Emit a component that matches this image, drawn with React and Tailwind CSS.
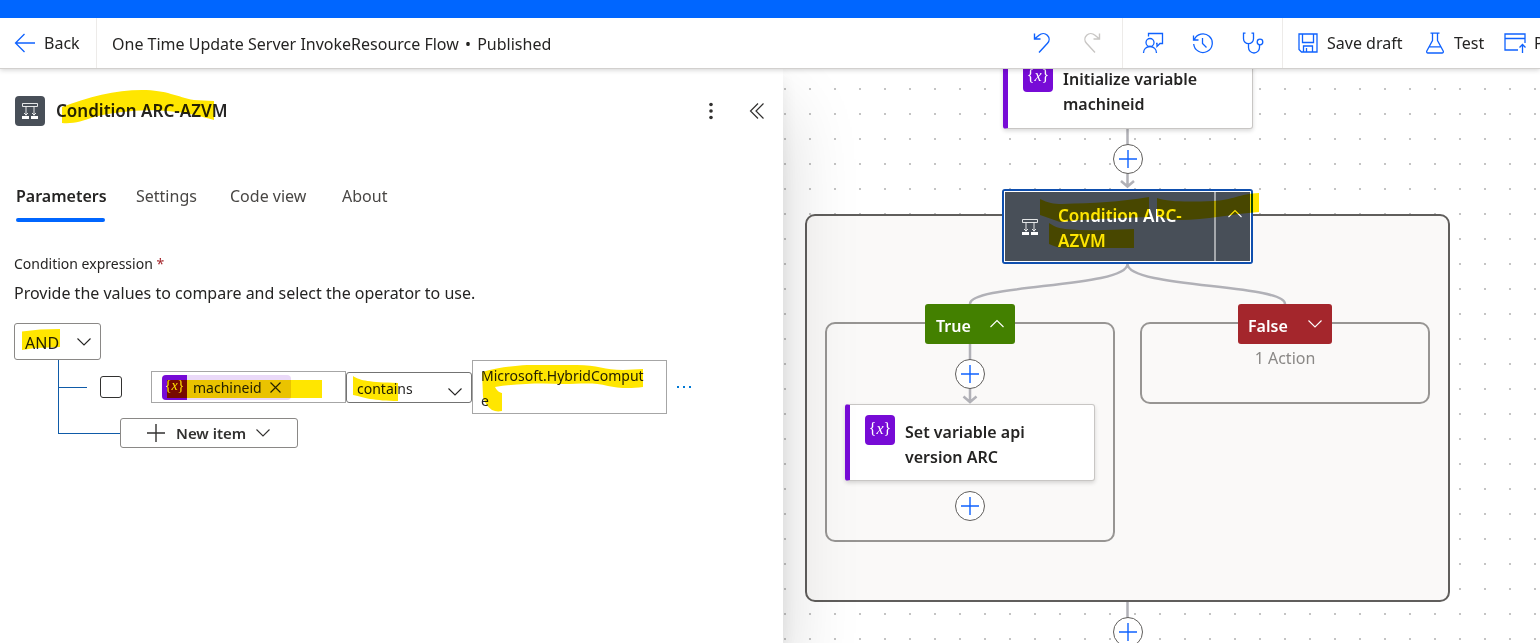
import React from "react";

function Svg({ size = 22, className = "", children, ...rest }) {
  return (
    <svg
      width={size}
      height={size}
      viewBox={`0 0 ${size} ${size}`}
      fill="none"
      stroke="currentColor"
      strokeWidth="1.3"
      aria-hidden="true"
      className={`shrink-0 ${className}`}
      {...rest}
    >
      {children}
    </svg>
  );
}

const BackIcon = () => (
  <Svg className="text-[#0f62fe]"><path d="M21 11H2M10.500 2L1.500 11l9 9" /></Svg>
);
const UndoIcon = () => (
  <Svg className="text-[#0f62fe]" strokeWidth="1.4">
    <path d="M3.500 1.500v5.500h6M3.800 6.800L8 3.200C10.500 1.200 14 1 16.300 3.200c2.400 2.300 2.300 5.700.2 8L8 20.500" />
  </Svg>
);
const RedoIcon = () => (
  <Svg className="text-[#c8c6c4]" strokeWidth="1.4">
    <path d="M18.500 1.500v5.500h-6M18.200 6.800L14 3.200C11.500 1.200 8 1 5.700 3.200c-2.400 2.300-2.300 5.700-.2 8L14 20.500" />
  </Svg>
);
const FeedbackIcon = () => (
  <Svg className="text-[#0f62fe]">
    <path d="M6.500 4.500v-3h14v10h-2.500l-3 3v-3h-1" />
    <circle cx="8" cy="10.500" r="4" />
    <path d="M1.500 21c0-3.700 2.700-6.500 6.500-6.500s6.500 2.800 6.500 6.500" />
  </Svg>
);
const HistoryIcon = () => (
  <Svg className="text-[#0f62fe]">
    <path d="M1.500 3.500v4.500h5M2.300 7.800A9.300 9.300 0 1 1 1.700 12M10.500 6v5.500l4 4" />
  </Svg>
);
const CheckerIcon = () => (
  <Svg className="text-[#0f62fe]">
    <path d="M3.500 1.200H1.500v5.500a5 5 0 0 0 10 0V1.200h-2M6.500 11.700v3.800a5.500 5.500 0 0 0 11 0v-2.700" />
    <circle cx="18" cy="10" r="2.800" />
  </Svg>
);
const SaveIcon = () => (
  <Svg className="text-[#0f62fe]">
    <path d="M2 2h18v18H4.500L2 17.500zM5.500 2v8.500h11V2M6.500 20v-6h9v6M9.500 16v4" />
  </Svg>
);
const FlaskIcon = () => (
  <Svg className="text-[#0f62fe]">
    <path d="M6.500 1.200h9M8.500 1.200v7.300L2.800 19c-.5 1 .1 2 1.200 2h14c1.100 0 1.700-1 1.200-2L13.500 8.500V1.200M5.300 14.800h11.400" />
  </Svg>
);
const PublishIcon = () => (
  <Svg className="text-[#0f62fe]">
    <path d="M14 18H1V2h20v9M1 6.500h20M18.500 21v-8M15.500 15.500l3-3 3 3" />
  </Svg>
);
const Chevron = ({ up = false, w = 14, className = "" }) => (
  <svg width={w} height="10" viewBox="0 0 14 10" fill="none" stroke="currentColor" strokeWidth="1.1" aria-hidden="true" className={`shrink-0 ${className}`}>
    <path d={up ? "M.5 8L7 1.500 13.500 8" : "M.5 1.500L7 8l6.500-6.500"} />
  </svg>
);
const ConditionIcon = () => (
  <svg width="16" height="16" viewBox="0 0 16 16" fill="none" stroke="#fff" strokeWidth="1" aria-hidden="true" className="shrink-0">
    <path d="M.5.5h15v3H.5zM4 3.500v9M12 3.500v9M2 10l2 2 2-2M10 10l2 2 2-2" strokeOpacity=".85" />
    <path d="M0 13h7v3H0zM9 13h7v3H9z" fill="#fff" stroke="none" />
  </svg>
);
const PlusIcon = ({ className }) => (
  <svg width="20" height="20" viewBox="0 0 20 20" fill="none" stroke="currentColor" strokeWidth="1.400" aria-hidden="true" className={className}>
    <path d="M10 1v18M1 10h18" />
  </svg>
);

function VariableBadge({ className = "" }) {
  return (
    <span className={`flex shrink-0 items-center justify-center bg-[#770bd6] pb-[3px] font-['Liberation_Serif',serif] text-white ${className}`}>
      {"{"}<i>x</i>{"}"}
    </span>
  );
}

function Header() {
  const icon = "flex h-full w-[50px] shrink-0 items-center justify-center";
  return (
    <header className="relative z-20 bg-white shadow-[0_1px_5px_rgba(0,0,0,0.18)]">
      <div className="h-[18px] bg-[#0066ff]" />
      <div className="flex h-[51px] items-stretch border-b border-[#d2d0ce]">
        <button className="flex w-[97px] shrink-0 items-center gap-2 border-r border-[#edebe9] pl-[14px]">
          <BackIcon />
          <span>Back</span>
        </button>
        <h1 className="min-w-0 flex-1 truncate pt-px pl-[15px] leading-[50px]">
          One Time Update Server InvokeResource Flow <span className="px-[2px]">•</span> Published
        </h1>
        <div className="flex w-[523px] shrink-0 items-center overflow-hidden whitespace-nowrap">
          <button className={icon} aria-label="Undo"><UndoIcon /></button>
          <button className={icon} aria-label="Redo" disabled><RedoIcon /></button>
          <div className="ml-[5px] flex h-full shrink-0 border-x border-[#edebe9] pr-1 pl-[5px]">
            <button className={icon} aria-label="Send feedback"><FeedbackIcon /></button>
            <button className={icon} aria-label="Version history"><HistoryIcon /></button>
            <button className={icon} aria-label="Flow checker"><CheckerIcon /></button>
          </div>
          <button className="ml-[14px] flex w-[127px] shrink-0 items-center gap-2"><SaveIcon />Save draft</button>
          <button className="flex w-[80px] shrink-0 items-center gap-2"><FlaskIcon />Test</button>
          <button className="flex shrink-0 items-center gap-2"><PublishIcon />Publish</button>
        </div>
      </div>
    </header>
  );
}

function PanelHighlights() {
  return (
    <svg className="pointer-events-none absolute inset-0 h-full w-full mix-blend-multiply" fill="#ffe600" aria-hidden="true">
      <g transform="translate(0 -69)">
        <path d="M62 107C88 97 115 90 142 90c25 0 35 7 52 10l20 1v19c-15-4-24-7-38-8-30-4-60 0-82 5-12 4-20 7-32 6z" />
        <path d="M22 331.500L40 329.500 60 329v18L35 348 22 350z" />
        <path d="M167 380h155v18H167z" />
        <path d="M353 376c8 5 16 6 45 7v18c-12 0-20-1-28-2-7-1-10-3-17-4z" />
        <path d="M482 372c18-5 32-6 45-7h50c20 0 28 5 46 5l20-1v18c-14 2-26 1-35-1-14-4-28-2-45-2-20-1-42-1-68 3 3 5 4 5 7 6v18c-5 1-7 0-10-1-5-4-7-7-9-13z" />
      </g>
    </svg>
  );
}

function ConditionPanel() {
  const tab = "flex h-[42px] items-start pt-1 leading-6 text-[#484644]";
  return (
    <aside className="relative z-10 bg-white px-[14px] pt-[27px] shadow-[0_40px_72px_rgba(0,0,0,0.16),0_8px_18px_rgba(0,0,0,0.08)]">
      <div className="flex h-[30px] items-center">
        <span className="ml-px flex size-[30px] items-center justify-center rounded-sm bg-[#484f58]">
          <ConditionIcon />
        </span>
        <h2 className="ml-[11px] flex-1 text-[17px] font-semibold">Condition ARC-AZVM</h2>
        <button aria-label="More commands" className="flex size-[30px] items-center justify-center">
          <svg width="6" height="18" viewBox="0 0 6 18" fill="#323130" aria-hidden="true">
            <circle cx="3" cy="2.500" r="1.800" /><circle cx="3" cy="9" r="1.800" /><circle cx="3" cy="15.500" r="1.800" />
          </svg>
        </button>
        <button aria-label="Collapse panel" className="ml-[19px] flex w-6 items-center justify-center">
          <svg width="16" height="16" viewBox="0 0 16 16" fill="none" stroke="#323130" strokeWidth="1.200" aria-hidden="true">
            <path d="M9 .5L1.500 8 9 15.500M14.500.5L7 8l7.500 7.500" />
          </svg>
        </button>
      </div>

      <div role="tablist" className="mt-[54px] flex pl-[2px]">
        <button role="tab" aria-selected="true" className="flex h-[42px] w-[89px] flex-col justify-between pt-1 leading-6 font-semibold whitespace-nowrap">
          Parameters
          <span className="h-1 w-full rounded-full bg-[#0066ff]" />
        </button>
        <button role="tab" aria-selected="false" className={`${tab} ml-[31px] w-[94px]`}>Settings</button>
        <button role="tab" aria-selected="false" className={`${tab} w-[112px]`}>Code view</button>
        <button role="tab" aria-selected="false" className={tab}>About</button>
      </div>

      <div className="mt-8 text-[14px] leading-5">
        Condition expression <span className="text-[#a4262c]">*</span>
      </div>
      <p className="mt-[7px] leading-6">Provide the values to compare and select the operator to use.</p>

      <div className="relative mt-[18px] w-[87px]">
        <select aria-label="Group operator" className="h-[37px] w-full appearance-none rounded-[3px] border border-[#8a8886] bg-white pt-[3px] pl-[10px]">
          <option>AND</option>
          <option>OR</option>
        </select>
        <Chevron w={16} className="pointer-events-none absolute top-[14px] right-[9px]" />
      </div>

      <div className="ml-[44px]">
        <div className="flex h-[58px] items-center border-l border-[#0f5ba8] pb-1">
          <span className="h-px w-[28px] bg-[#0f5ba8]" />
          <input type="checkbox" aria-label="Select row" className="ml-[13px] size-[22px] shrink-0 appearance-none rounded-[3px] border border-[#323130] bg-white" />
          <div className="ml-[29px] flex h-8 w-[195px] shrink-0 items-center border border-[#a6a6a6] pl-[10px] text-[14px]">
            <span className="flex h-[25px] w-[129px] shrink-0 items-center rounded-sm bg-[#ead9f8]">
              <VariableBadge className="h-[25px] w-[25px] rounded-l-sm text-[14px]" />
              <span className="ml-[6px] flex-1">machineid</span>
              <button aria-label="Remove machineid" className="mr-[10px]">
                <svg width="11" height="11" viewBox="0 0 11 11" stroke="currentColor" strokeWidth="1.200" aria-hidden="true"><path d="M.5.5l10 10M10.500.5l-10 10" /></svg>
              </button>
            </span>
            <input aria-label="Left value" className="min-w-0 flex-1 outline-none" />
          </div>
          <div className="relative w-[126px] shrink-0">
            <select aria-label="Operator" className="h-[31px] w-full appearance-none rounded-[3px] border border-[#737373] bg-white pt-[3px] pl-[10px] text-[14px]">
              <option>contains</option>
              <option>is equal to</option>
            </select>
            <Chevron w={16} className="pointer-events-none absolute top-[15px] right-[9px]" />
          </div>
          <textarea
            aria-label="Right value"
            rows={2}
            defaultValue="Microsoft.HybridCompute"
            className="h-[54px] w-[195px] shrink-0 resize-none overflow-hidden border border-[#a6a6a6] bg-white pt-[2px] pr-[18px] pl-2 text-[14px] leading-[25px] break-all"
          />
          <button aria-label="Row menu" className="ml-[9px] flex h-6 w-4 items-center justify-center">
            <svg width="14" height="2" viewBox="0 0 14 2" fill="#0078d4" aria-hidden="true"><path d="M0 0h2v2H0zM6 0h2v2H6zM12 0h2v2h-2z" /></svg>
          </button>
        </div>
        <div className="flex">
          <span className="h-4 w-[62px] border-b border-l border-[#0f5ba8]" />
          <button className="flex h-[30px] w-[178px] items-center rounded-[3px] border border-[#8a8886] bg-white pl-[25px] font-semibold text-[#323130]">
            <PlusIcon className="shrink-0" />
            <span className="mr-[10px] ml-[10px] text-[15px]">New item</span>
            <Chevron />
          </button>
        </div>
      </div>
      <PanelHighlights />
    </aside>
  );
}

function AddButton({ className }) {
  return (
    <button aria-label="Insert a new step" className={`absolute flex size-[30px] items-center justify-center rounded-full border border-[#605e5c] bg-white text-[#0f62fe] ${className}`}>
      <PlusIcon />
    </button>
  );
}

function ActionCard({ title, className }) {
  return (
    <div className={`absolute flex w-[250px] rounded-[3px] border border-l-[5px] border-[#c8c6c4] border-l-[#770bd6] bg-white pt-[10px] pr-8 pl-[15px] shadow-[0_2px_4px_rgba(0,0,0,0.15)] ${className}`}>
      <VariableBadge className="size-[30px] rounded-sm text-[16px]" />
      <h3 className="ml-[10px] pt-[5px] leading-[25px] font-semibold">{title}</h3>
    </div>
  );
}

function Canvas() {
  return (
    <main className="relative overflow-hidden bg-[radial-gradient(circle_at_2px_2px,#c4c4c4_1px,transparent_1px)] bg-[length:25px_25px] bg-[position:0px_18px]">
      <div className="absolute top-[145px] left-[22px] h-[388px] w-[645px] rounded-[10px] border-2 border-[#605e5c] bg-[#faf9f8]" />
      <div className="absolute top-[253px] left-[42px] h-[220px] w-[290px] rounded-[10px] border-2 border-[#979593]" />
      <div className="absolute top-[253px] left-[357px] h-[82px] w-[290px] rounded-[10px] border-2 border-[#979593]" />

      <svg className="absolute inset-0 h-full w-full" fill="none" stroke="#b1b1b7" strokeWidth="2.500" aria-hidden="true">
        <g transform="translate(-783 -69)">
          <path d="M1127.500 129v58M1121 181l6.500 5.500 6.500-5.500" />
          <path d="M1127.500 264c0 24-157.500 20-157.500 40M1127.500 264c0 24 157.500 20 157.500 40" />
          <path d="M970 344v58M963.500 396.500l6.500 5.500 6.500-5.500" />
          <path d="M1127.500 602v20" />
        </g>
      </svg>

      <ActionCard title="Initialize variable machineid" className="-top-[18px] left-[220px] h-[78px]" />
      <AddButton className="top-[75px] left-[330px]" />

      <div className="absolute top-[120px] left-[219px] flex h-[75px] w-[251px] rounded-[3px] border-2 border-[#0f4fae] bg-[#484f58] text-white">
        <div className="flex w-full border border-white">
          <div className="flex flex-1 items-center border-r-2 border-[#a5a8ac] pl-[17px]">
            <ConditionIcon />
            <h3 className="ml-5 pt-[3px] text-[17px] leading-[25px] font-semibold">Condition ARC-AZVM</h3>
          </div>
          <button aria-label="Collapse Condition ARC-AZVM" className="flex w-[34px] items-start justify-center pt-[17px] pl-1">
            <Chevron up />
          </button>
        </div>
      </div>

      <button className="absolute top-[235px] left-[142px] flex h-10 w-[90px] items-center justify-between rounded-[3px] bg-[#438000] px-[11px] font-semibold text-white">
        <span className="pt-[3px]">True</span>
        <Chevron up />
      </button>
      <button className="absolute top-[235px] left-[455px] flex h-10 w-[94px] items-center justify-between rounded-[3px] bg-[#a4262c] px-[10px] font-semibold text-white">
        <span className="pt-[3px]">False</span>
        <Chevron />
      </button>
      <p className="absolute top-[277px] left-[357px] w-[290px] text-center leading-6 text-[#8a8886]">1 Action</p>

      <AddButton className="top-[290px] left-[172px]" />
      <ActionCard title="Set variable api version ARC" className="top-[335px] left-[62px] h-[77px]" />
      <AddButton className="top-[422px] left-[172px]" />
      <AddButton className="top-[548px] left-[330px]" />

      <svg className="pointer-events-none absolute inset-0 h-full w-full mix-blend-multiply" fill="#ffe600" aria-hidden="true">
        <g transform="translate(-783 -69)">
          <path d="M1040 199c8 4 14 5 22 5 32-1 57-2 87-7v20c-30 1-60 2-89 5-7-2-13-5-20-7z" />
          <path d="M1157 198c12 4 30 4 56 3 20-1 26-7 46-8v19c-28 2-52 8-79 8-8 0-16-2-23-4z" />
          <path d="M1049 223c6 4 10 5 16 6 23 2 46 1 69 0v19h-70c-6 0-10-2-15-4z" />
        </g>
      </svg>
    </main>
  );
}

export default function App() {
  return (
    <div className="flex h-screen flex-col overflow-hidden bg-white font-['Noto_Sans','Open_Sans',sans-serif] text-[16px] text-[#252423]">
      <Header />
      <div className="grid flex-1 grid-cols-[783fr_757fr]">
        <ConditionPanel />
        <Canvas />
      </div>
    </div>
  );
}
